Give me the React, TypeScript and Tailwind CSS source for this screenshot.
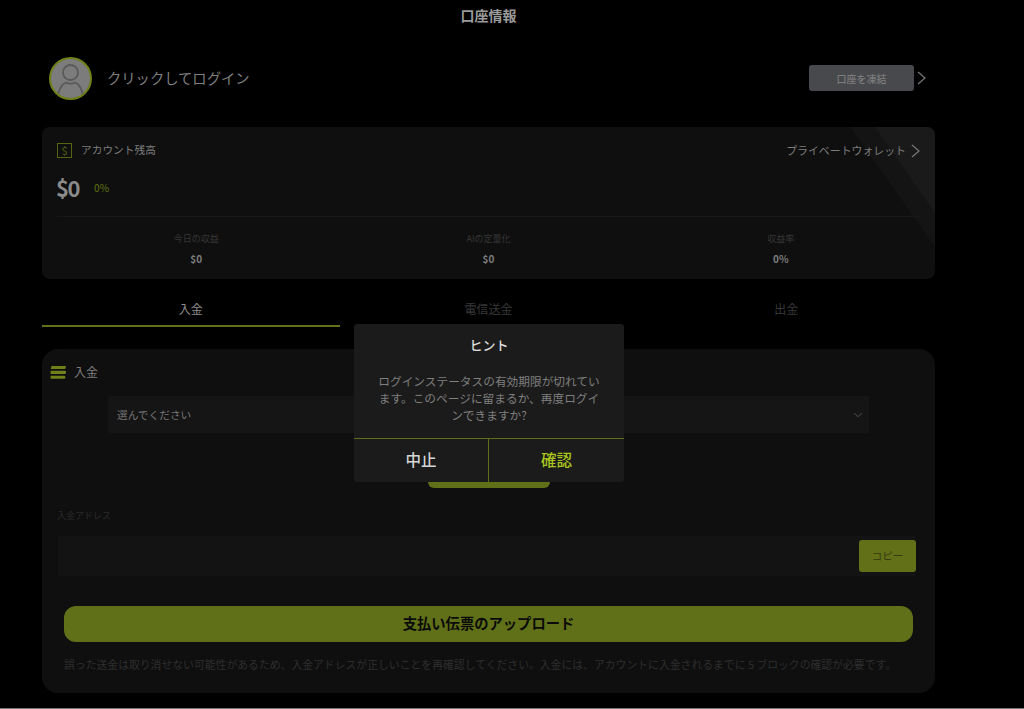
import React from "react";
import { ChevronDown } from "lucide-react";

const stats = [
  { label: "今日の収益", value: "$0" },
  { label: "AIの定量化", value: "$0" },
  { label: "収益率", value: "0%" },
];

const tabs = ["入金", "電信送金", "出金"];

const Avatar = () => (
  <div className="w-[43px] h-[43px] rounded-full border-2 border-[#6f8019] bg-[#7c7c7c] overflow-hidden shrink-0">
    <svg viewBox="0 0 39 39" className="w-full h-full" fill="none" stroke="#5a5a5a" strokeWidth="1.8">
      <circle cx="19.5" cy="13.5" r="7.5" />
      <path d="M7 38c0-7 4-13 8-14.5C17 25 22 25 24 23.5c4 1.500 8 7.500 8 14.500" />
    </svg>
  </div>
);

const DollarIcon = () => (
  <div className="w-[15px] h-[15px] border border-[#56640f] text-[#56640f] flex items-center justify-center text-[11px] leading-none">
    $
  </div>
);

const StackIcon = () => (
  <svg width="16" height="13" viewBox="0 0 16 13" className="shrink-0">
    <path d="M1.500 0H16l-.8 3H.8z" fill="#6f8019" />
    <path d="M.6 4.800h14.200a.6.6 0 0 1 0 3.200H.6z" fill="#6f8019" />
    <path d="M.6 9.800h13.400a.6.6 0 0 1 0 3H.6z" fill="#6f8019" />
  </svg>
);

const Caret = ({ color }: { color: string }) => (
  <svg width="9" height="14" viewBox="0 0 9 14" fill="none" stroke={color} strokeWidth="1.200" className="shrink-0">
    <path d="M1 1l7 6-7 6" />
  </svg>
);

export default function App() {
  return (
    <div
      className="relative h-[709px] w-[1024px] overflow-hidden bg-black border-b border-b-[#777]"
      style={{ fontFamily: '"Noto Sans CJK JP", "Liberation Sans", sans-serif' }}
    >
      <div className="w-[893px] ml-[42px]">
        <h1 className="h-[31px] flex items-center justify-center text-[14px] font-bold text-[#9a9a9a]">
          口座情報
        </h1>

        {/* profile row */}
        <div className="mt-[26px] h-[43px] flex items-center pl-[7px]">
          <Avatar />
          <span className="ml-[15px] mb-[2px] text-[14.3px] text-[#7f7f7f]">クリックしてログイン</span>
          <div className="ml-auto flex items-center mr-[9px] mb-[1px]">
            <button className="w-[105px] h-[26px] rounded-[3px] bg-[#48494d] text-[10px] text-[#7b7b7b] font-medium">
              口座を凍結
            </button>
            <div className="ml-[3px]">
              <Caret color="#777" />
            </div>
          </div>
        </div>

        {/* balance card */}
        <section className="relative mt-[27px] h-[152px] rounded-[8px] bg-[#0f0f0f] overflow-hidden">
          <svg className="absolute inset-0 w-full h-full" viewBox="0 0 893 152" preserveAspectRatio="none">
            <path d="M808 0H893V120z" fill="#141414" />
            <path d="M833 0H893V86z" fill="#1a1a1a" />
          </svg>
          <div className="relative px-[15px]">
            <div className="flex items-center justify-between h-[15px] mt-[16px]">
              <div className="flex items-center gap-[9px]">
                <DollarIcon />
                <span className="text-[10.7px] text-[#7d7d7d]">アカウント残高</span>
              </div>
              <div className="flex items-center gap-[5px] text-[#7d7d7d]">
                <span className="text-[10.9px]">プライベートウォレット</span>
                <Caret color="#777" />
              </div>
            </div>
            <div className="flex items-center mt-[16px] h-[26px]">
              <span className="-ml-[1px] text-[22px] font-bold text-[#8a8a8a] tracking-[-1.5px]">$0</span>
              <span className="ml-[15px] text-[10px] font-medium text-[#56640f]">0%</span>
            </div>
            <div className="mt-[16px] border-t border-t-[#171717]" />
            <div className="grid grid-cols-3 -mx-[7px] mt-[15px] text-center">
              {stats.map((s) => (
                <div key={s.label}>
                  <div className="h-[13px] flex items-center justify-center text-[9px] text-[#363636]">{s.label}</div>
                  <div className="mt-[7px] h-[13px] flex items-center justify-center text-[10px] font-bold text-[#7d7d7d]">
                    {s.value}
                  </div>
                </div>
              ))}
            </div>
          </div>
        </section>

        {/* tabs */}
        <div className="grid grid-cols-3 mt-[18px] h-[30px]">
          {tabs.map((t, i) => (
            <div
              key={t}
              className={`flex items-center justify-center text-[12px] pb-[4px] border-b-2 ${
                i === 0 ? "border-b-[#62721a] text-[#8f8f8f]" : "border-b-transparent text-[#383838]"
              }`}
            >
              {t}
            </div>
          ))}
        </div>

        {/* deposit card */}
        <section className="mt-[22px] h-[344px] rounded-[16px] bg-[#0f0f0f] pt-[16px]">
          <div className="flex items-center pl-[8px] h-[14px] gap-[8px]">
            <StackIcon />
            <span className="text-[12px] text-[#7d7d7d]">入金</span>
          </div>
          <div className="ml-[66px] mr-[66px] mt-[17px] h-[37px] bg-[#151515] rounded-[2px] flex items-center justify-between pl-[9px] pr-[4px]">
            <span className="mt-[1px] text-[10.7px] text-[#777]">選んでください</span>
            <ChevronDown className="w-[14px] h-[14px] text-[#5a5a5a]" strokeWidth={1.5} />
          </div>
          <div className="mt-[19px] mx-auto w-[122px] h-[36px] rounded-[6px] bg-[#607018]" />
          <div className="mt-[21px] ml-[15px] h-[13px] flex items-center text-[9px] text-[#2b2b2b]">入金アドレス</div>
          <div className="mt-[14px] ml-[16px] mr-[19px] h-[40px] bg-[#131313] flex items-center justify-end">
            <button className="w-[57px] h-[32px] rounded-[3px] bg-[#627018] text-[10.5px] text-[#333a10]">コピー</button>
          </div>
          <button className="block mt-[30px] ml-[22px] w-[849px] h-[36px] rounded-[12px] bg-[#607018] pb-[2px] text-[14.3px] font-bold text-[#0a0a0a]">
            支払い伝票のアップロード
          </button>
          <p className="mt-[14px] ml-[22px] whitespace-nowrap text-[10.83px] leading-[16px] text-[#2e2e2e]">
            誤った送金は取り消せない可能性があるため、入金アドレスが正しいことを再確認してください。入金には、アカウントに入金されるまでに 5 ブロックの確認が必要です。
          </p>
        </section>
      </div>

      {/* login expired dialog */}
      <div className="absolute left-[354px] top-[324px] w-[270px] h-[158px] rounded-[3px] bg-[#1b1b1b] flex flex-col">
        <div className="h-[42px] flex items-center justify-center text-[13px] font-medium text-[#dedede]">ヒント</div>
        <p className="mx-auto mt-[6px] w-[224px] text-center text-[11.7px] leading-[17px] text-[#7f7f7f]">
          ログインステータスの有効期限が切れています。このページに留まるか、再度ログインできますか?
        </p>
        <div className="mt-auto h-[44px] grid grid-cols-2 border-t border-t-[#5f6f17]">
          <button className="pb-[2px] text-[15.5px] font-medium text-[#d5d5d5] border-r border-r-[#5f6f17]">中止</button>
          <button className="pb-[2px] text-[15.5px] font-medium text-[#a9c420]">確認</button>
        </div>
      </div>
    </div>
  );
}
